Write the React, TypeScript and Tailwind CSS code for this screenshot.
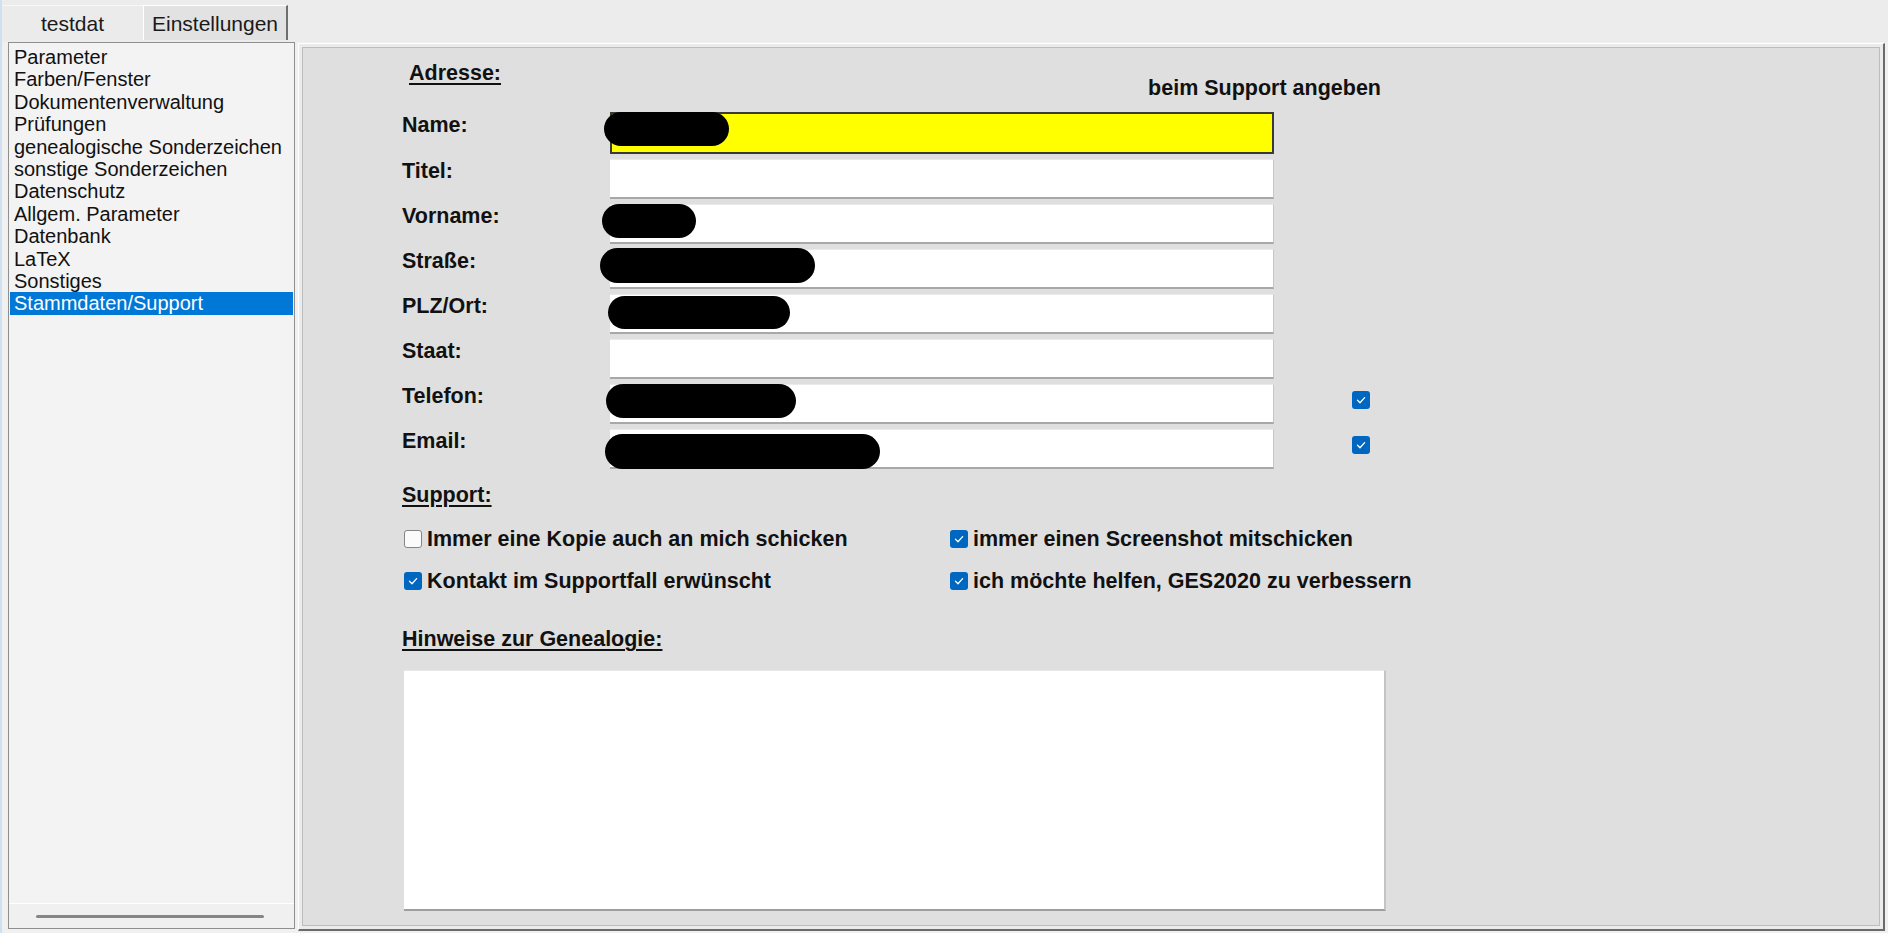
import React from "react";

const menuItems = [
  "Parameter",
  "Farben/Fenster",
  "Dokumentenverwaltung",
  "Prüfungen",
  "genealogische Sonderzeichen",
  "sonstige Sonderzeichen",
  "Datenschutz",
  "Allgem. Parameter",
  "Datenbank",
  "LaTeX",
  "Sonstiges",
  "Stammdaten/Support",
];

interface Row {
  label: string;
  blob?: string;
  highlight?: boolean;
  check?: boolean;
}

const rows: Row[] = [
  { label: "Name:", blob: "left-[-8px] top-[-2px] w-[125px] h-[34px]", highlight: true },
  { label: "Titel:" },
  { label: "Vorname:", blob: "left-[-8px] top-[-1px] w-[94px] h-[34px]" },
  { label: "Straße:", blob: "left-[-10px] top-[-2px] w-[215px] h-[35px]" },
  { label: "PLZ/Ort:", blob: "left-[-2px] top-[1px] w-[182px] h-[33px]" },
  { label: "Staat:" },
  { label: "Telefon:", blob: "left-[-4px] top-[-1px] w-[190px] h-[34px]", check: true },
  { label: "Email:", blob: "left-[-5px] top-[4px] w-[275px] h-[35px]", check: true },
];

// small Windows 11 style checkbox
const Box: React.FC<{ checked?: boolean }> = ({ checked }) =>
  checked ? (
    <span className="flex h-[18px] w-[18px] shrink-0 items-center justify-center rounded-[3px] bg-[#0067c0]">
      <svg width="12" height="12" viewBox="0 0 12 12" fill="none">
        <path d="M2.5 6.3 L5 8.7 L9.6 3.6" stroke="white" strokeWidth="1.3" strokeLinecap="round" strokeLinejoin="round" />
      </svg>
    </span>
  ) : (
    <span className="h-[18px] w-[18px] shrink-0 rounded-[3px] border border-[#858585] bg-[#fbfbfb]" />
  );

const Option: React.FC<{ checked?: boolean; text: string }> = ({ checked, text }) => (
  <div className="flex items-center gap-[5px]">
    <Box checked={checked} />
    <span className="text-[21.5px] font-bold leading-[24px] text-[#111]">{text}</span>
  </div>
);

const Field: React.FC<{ row: Row }> = ({ row }) => (
  <div
    className={
      row.highlight
        ? "relative h-[42px] w-[664px] -mt-px border-2 border-[#3a3a3a] bg-[#ffff00]"
        : "relative h-[40px] w-[664px] border-t border-t-[#eaeaea] border-r border-r-[#c6c6c6] border-b-2 border-b-[#a8a8a8] bg-white"
    }
  >
    {row.blob && <div className={"absolute rounded-full bg-black " + row.blob} />}
  </div>
);

export default function App() {
  return (
    <div className="flex h-[933px] w-[1888px] flex-col overflow-hidden border-l-2 border-l-[#cfe0f1] bg-[#f0f0f0] font-['Liberation_Sans',Arial,sans-serif] text-black">
      {/* tabs */}
      <div className="flex h-[42px] shrink-0 bg-[#ececec] pt-[5px]">
        <div className="flex h-[35px] w-[141px] items-center justify-center border-t border-t-[#f7f7f7] bg-[#ebebeb] text-[21px] leading-none text-[#1a1a1a]">
          testdat
        </div>
        <div className="flex h-[35px] w-[145px] items-center justify-center border-l border-t border-l-white border-t-white border-r-2 border-r-[#6e6e6e] bg-[#e2e2e2] text-[21px] leading-none text-[#1a1a1a]">
          Einstellungen
        </div>
      </div>

      <div className="flex min-h-0 flex-1">
        {/* list */}
        <div className="mb-[4px] ml-[6px] flex w-[287px] flex-col border border-[#8f8f8f] bg-[#f3f3f3]">
          <div className="flex-1 pt-[3px]">
            {menuItems.map((item, i) => (
              <div
                key={item}
                className={
                  i === menuItems.length - 1
                    ? "mx-px bg-[#0078d7] pl-[4px] text-[20px] leading-[22.4px] text-white"
                    : "mx-px pl-[4px] text-[20px] leading-[22.4px] text-[#111]"
                }
              >
                {item}
              </div>
            ))}
          </div>
          <div className="flex h-[25px] items-center border-t border-t-white bg-[#f0f0f0] pl-[27px]">
            <div className="h-[3px] w-[228px] rounded-full bg-[#858585]" />
          </div>
        </div>

        {/* settings panel */}
        <div className="mb-[2px] ml-[3px] mr-[3px] mt-px flex flex-1 border-l border-t border-l-white border-t-white border-b-2 border-r-2 border-b-[#6b6b6b] border-r-[#6b6b6b] bg-[#ebebeb] p-[3px]">
          <div className="flex-1 border border-[#bdbdbd] bg-[#dfdfdf] pl-[99px] pt-[13px]">
            <div className="flex w-[979px] items-start">
              <span className="ml-[7px] text-[21.5px] font-bold leading-[24px] text-[#111] underline decoration-2 underline-offset-[3px]">
                Adresse:
              </span>
              <span className="ml-auto mt-[15px] text-[21.5px] font-bold leading-[24px] text-[#111]">
                beim Support angeben
              </span>
            </div>

            <div className="mt-[13px] flex flex-col gap-[5px]">
              {rows.map((row) => (
                <div key={row.label} className="flex items-start">
                  <span className="w-[208px] text-[21.5px] font-bold leading-[24px] text-[#111]">{row.label}</span>
                  <Field row={row} />
                  {row.check && (
                    <div className="ml-[78px] mt-[7px]">
                      <Box checked />
                    </div>
                  )}
                </div>
              ))}
            </div>

            <div className="mt-[14px] text-[21.5px] font-bold leading-[24px] text-[#111] underline decoration-2 underline-offset-[3px]">
              Support:
            </div>

            <div className="ml-[2px] mt-[20px] grid grid-cols-[546px_auto] gap-y-[18px]">
              <Option text="Immer eine Kopie auch an mich schicken" />
              <Option checked text="immer einen Screenshot mitschicken" />
              <Option checked text="Kontakt im Supportfall erwünscht" />
              <Option checked text="ich möchte helfen, GES2020 zu verbessern" />
            </div>

            <div className="mt-[34px] text-[21.5px] font-bold leading-[24px] text-[#111] underline decoration-2 underline-offset-[3px]">
              Hinweise zur Genealogie:
            </div>

            <div className="ml-[2px] mt-[19px] h-[241px] w-[982px] border-t border-t-[#e8e8e8] border-r-2 border-r-[#c4c4c4] border-b-2 border-b-[#9e9e9e] bg-white" />
          </div>
        </div>
      </div>
    </div>
  );
}
